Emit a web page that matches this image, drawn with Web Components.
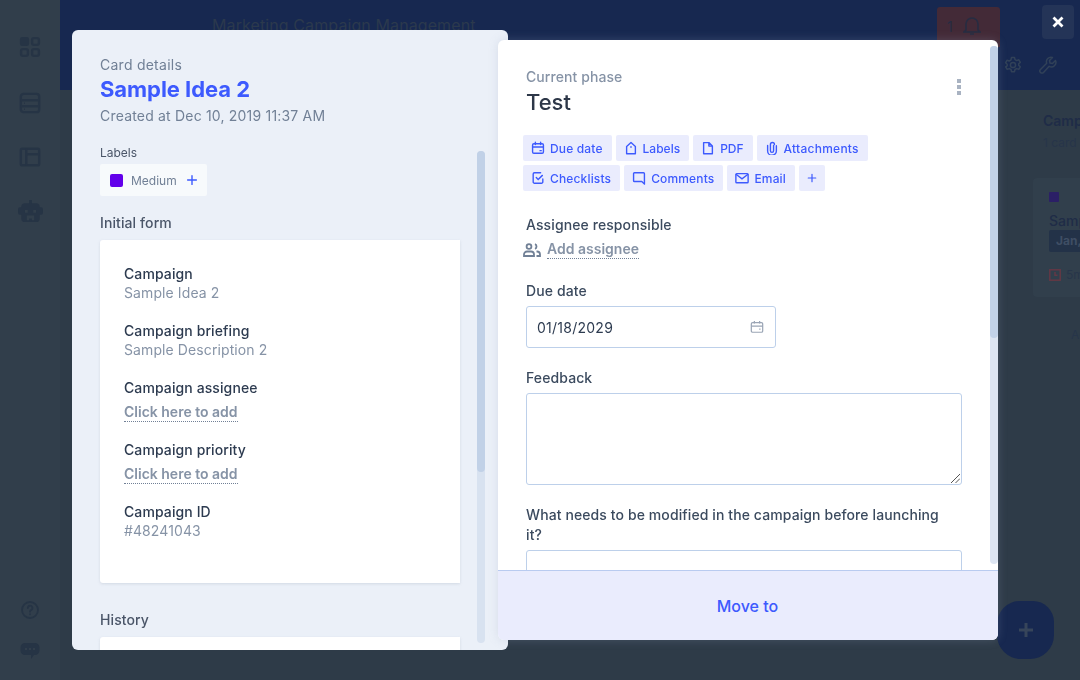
<!DOCTYPE html>
<html lang="en">
<head>
<meta charset="utf-8">
<title>Card details</title>
<style>
  html, body { margin: 0; height: 100%; overflow: hidden; background: #2e3b48; }
  body { font-family: Inter, "Liberation Sans", sans-serif; }
</style>
</head>
<body>
<app-backdrop></app-backdrop>
<modal-layer>
  <card-panel slot="left"></card-panel>
  <phase-panel slot="right"></phase-panel>
</modal-layer>

<script>
const ICONS = {
  calendar: '<rect x="1.800" y="3.200" width="12.400" height="10.800" rx="1.500"/><path d="M1.800 6.800h12.400M5 1.500v2.500M11 1.500v2.500M10.300 11h1.400"/>',
  label: '<path d="M3 14.500V6.200L8 1.800l5 4.400v8.300z" stroke-linejoin="round"/><path d="M7.700 6.800h.6"/>',
  file: '<path d="M3 1.800h6l4 4v8.700H3zM9 1.800v4h4" stroke-linejoin="round"/>',
  clip: '<path d="M9.800 5v6.200a1.800 1.800 0 0 1-3.600 0V4a2.300 2.300 0 0 1 4.600 0M13 5.500v5.800a5 5 0 0 1-10 0V5"/>',
  check: '<path d="M13.500 9v3.500a1.500 1.500 0 0 1-1.500 1.500H4a1.500 1.500 0 0 1-1.500-1.500V3.500A1.500 1.500 0 0 1 4 2h7M6 7.500l2.200 2.200 4.800-4.700"/>',
  comment: '<path d="M2.800 2h10.400a1 1 0 0 1 1 1v12l-3-3H2.800a1 1 0 0 1-1-1V3a1 1 0 0 1 1-1z" stroke-linejoin="round"/>',
  mail: '<rect x="1" y="3" width="14" height="10.500" rx="1"/><path d="M1.500 4l6.500 5 6.500-5"/>',
  plus: '<path d="M8 3v10M3 8h10"/>'
};

function icon(name, size) {
  return `<svg width="${size}" height="${size}" viewBox="0 0 16 16" fill="none" stroke="currentColor" stroke-width="1.600" stroke-linecap="round">${ICONS[name]}</svg>`;
}

class AppBackdrop extends HTMLElement {
  connectedCallback() {
    this.attachShadow({ mode: 'open' });
    this.shadowRoot.innerHTML = `
      <style>
        :host { display: grid; grid-template-columns: 60px 1fr; height: 680px; color: #27354a; font-size: 14px; }
        .side {
          background: #313e4b;
          display: flex; flex-direction: column; align-items: center;
          padding-top: 36px; box-sizing: border-box;
        }
        .side svg { display: block; flex: none; color: #263445; }
        .side .i1 { margin-bottom: 34px; }
        .side .i2 { margin-bottom: 32px; }
        .side .i3 { margin-bottom: 31px; }
        .side .spacer { flex: 1; }
        .side .i5 { margin-bottom: 23px; }
        .side .i6 { margin-bottom: 20px; }
        .content { display: flex; flex-direction: column; min-width: 0; }
        header { height: 90px; background: #172850; box-sizing: border-box; display: flex; flex-direction: column; }
        .top { display: flex; height: 40px; padding: 7px 80px 0 152px; box-sizing: border-box; }
        .title { font-size: 16px; line-height: 36px; letter-spacing: .1px; color: #2b394d; }
        .bell {
          margin-left: auto; width: 63px; height: 40px; background: #432a37;
          border-radius: 3px 3px 0 0; color: #262c42;
          display: flex; align-items: center; gap: 10px; padding: 0 0 2px 10px; box-sizing: border-box;
        }
        .tools { display: flex; justify-content: flex-end; gap: 17px; padding: 16px 23px 0 0; color: #314158; }
        main { flex: 1; background: #2e3b48; display: flex; justify-content: flex-end; overflow: hidden; }
        .lane { width: 47px; flex: none; overflow: hidden; white-space: nowrap; padding-top: 21px; box-sizing: border-box; }
        .lane-name { font-weight: 600; line-height: 20px; margin-left: 10px; color: #1f2c47; font-size: 14px; }
        .lane-count { font-size: 12px; line-height: 18px; margin: 3px 0 0 10px; color: #27354a; }
        .sample {
          margin-top: 26px; height: 119px; background: #313f4c; border-radius: 4px 0 0 4px;
          padding: 14px 0 0 16px; box-sizing: border-box;
        }
        .dot { width: 10px; height: 10px; background: #2b1f66; border-radius: 1px; }
        .name { font-weight: 500; line-height: 18px; margin-top: 10px; color: #1f2c47; }
        .date { background: #233248; color: #3f4e64; font-size: 12px; font-weight: 700; line-height: 22px; padding-left: 7px; border-radius: 2px 0 0 2px; }
        .time { display: flex; align-items: center; gap: 5px; margin-top: 15px; font-size: 12px; color: #28364a; }
        .time svg { color: #633845; flex: none; }
        .add { font-size: 12px; margin: 30px 0 0 38px; color: #27354a; }
        .fab-wrap { position: absolute; left: 997px; top: 601px; width: 57px; height: 58px; background: #172850; border-radius: 23px 21px 24px 24px; display: flex; align-items: center; justify-content: center; color: #37455a; }
      </style>
      <nav class="side">
        <svg class="i1" width="22" height="22" viewBox="0 0 24 24"><rect x="1" y="1" width="10" height="10" rx="2.500" fill="currentColor"/><g fill="none" stroke="currentColor" stroke-width="2.600"><rect x="14.300" y="2.300" width="7.400" height="7.400" rx="2"/><rect x="2.300" y="14.300" width="7.400" height="7.400" rx="2"/><rect x="14.300" y="14.300" width="7.400" height="7.400" rx="2"/></g></svg>
        <svg class="i2" width="22" height="22" viewBox="0 0 24 24" fill="none" stroke="currentColor" stroke-width="2.600"><rect x="2" y="2" width="20" height="20" rx="3"/><path d="M2 9h20M2 15.500h20"/><path d="M5.500 12.300h1M5.500 18.800h1" stroke-width="1.600"/></svg>
        <svg class="i3" width="22" height="22" viewBox="0 0 24 24" fill="none" stroke="currentColor" stroke-width="2.600"><rect x="2" y="3" width="20" height="18" rx="1.500"/><path d="M8 3v18M8 9h14"/></svg>
        <svg class="i4" width="27" height="24" viewBox="0 0 28 26"><path fill="currentColor" d="M12.500 1h3v3.500h4.500a4 4 0 0 1 4 4V9h1.500a2 2 0 0 1 2 2v4a2 2 0 0 1-2 2H24v4a4 4 0 0 1-4 4H8a4 4 0 0 1-4-4v-4H2.500a2 2 0 0 1-2-2v-4a2 2 0 0 1 2-2H4v-.500a4 4 0 0 1 4-4h4.500zM8 12v3h3v-3zM17 12v3h3v-3zM10 18v5h2.500v-2h3v2H18v-5z" fill-rule="evenodd"/></svg>
        <div class="spacer"></div>
        <svg class="i5" width="18" height="18" viewBox="0 0 18 18" fill="none" stroke="currentColor" stroke-width="1.800" stroke-linecap="round"><circle cx="9" cy="9" r="8"/><path d="M6.800 7a2.300 2.300 0 1 1 3.300 2.100c-.8.400-1.100.9-1.100 1.600M9 13.200v.1"/></svg>
        <svg class="i6" width="20" height="18" viewBox="0 0 20 18"><path fill="currentColor" fill-rule="evenodd" d="M5 1h10a4.500 4.500 0 0 1 4.500 4.500v3A4.500 4.500 0 0 1 15 13h-1l-3 4v-4H5A4.500 4.500 0 0 1 .5 8.500v-3A4.500 4.500 0 0 1 5 1zM5 6v2h2V6zM9 6v2h2V6zM13 6v2h2V6z"/></svg>
      </nav>
      <div class="content">
        <header>
          <div class="top">
            <span class="title">Marketing Campaign Management</span>
            <div class="bell"><span>1</span>
              <svg width="18" height="20" viewBox="0 0 18 20" fill="none" stroke="currentColor" stroke-width="1.600"><path d="M3 14V8a6 6 0 0 1 12 0v6l2 2H1zM7 18h4"/></svg>
            </div>
          </div>
          <div class="tools">
            <svg width="18" height="18" viewBox="0 0 18 18" fill="none" stroke="currentColor" stroke-width="1.500"><circle cx="9" cy="9" r="2.600"/><path d="M7.500 1.500h3l.5 2.200 1.700.9 2.100-.8 1.500 2.600-1.600 1.400v1.600l1.600 1.400-1.500 2.600-2.100-.8-1.700.9-.5 2.200h-3l-.5-2.200-1.700-.9-2.100.8-1.500-2.600L3.200 9.800V8.200L1.600 6.800l1.500-2.600 2.100.8 1.700-.9z" stroke-linejoin="round"/></svg>
            <svg width="18" height="18" viewBox="0 0 18 18" fill="none" stroke="currentColor" stroke-width="1.500" stroke-linejoin="round"><path d="M16.500 4.500l-3 3-2.500-.5-.5-2.500 3-3a4.500 4.500 0 0 0-5.800 5.800L1.500 13.500a2 2 0 0 0 3 3l5.700-6.200a4.500 4.500 0 0 0 6.300-5.800z"/></svg>
          </div>
        </header>
        <main>
          <div class="lane">
            <div class="lane-name">Campaign</div>
            <div class="lane-count">1 card</div>
            <div class="sample">
              <div class="dot"></div>
              <div class="name">Sample</div>
              <div class="date">Jan, 18</div>
              <div class="time">
                <svg width="12" height="12" viewBox="0 0 12 12" fill="none" stroke="currentColor" stroke-width="1.500"><rect x=".8" y=".8" width="10.400" height="10.400"/><path d="M6 3v3.300h2.500"/></svg>
                5m
              </div>
            </div>
            <div class="add">Add</div>
          </div>
        </main>
      </div>
      <div class="fab-wrap">
        <svg width="14" height="14" viewBox="0 0 14 14" fill="none" stroke="currentColor" stroke-width="3"><path d="M7 0v14M0 7h14"/></svg>
      </div>
    `;
  }
}
customElements.define('app-backdrop', AppBackdrop);

class ModalLayer extends HTMLElement {
  connectedCallback() {
    this.attachShadow({ mode: 'open' });
    this.shadowRoot.innerHTML = `
      <style>
        :host { display: block; position: fixed; inset: 0; }
        .left { position: absolute; left: 72px; top: 30px; }
        .right { position: absolute; left: 498px; top: 40px; }
        button {
          position: absolute; left: 1042px; top: 5px; width: 32px; height: 34px;
          background: #243457; border: 0; border-radius: 4px; padding: 0;
          display: flex; align-items: center; justify-content: center; color: #fff;
        }
      </style>
      <div class="left"><slot name="left"></slot></div>
      <div class="right"><slot name="right"></slot></div>
      <button aria-label="Close">
        <svg width="12" height="12" viewBox="0 0 12 12" fill="none" stroke="currentColor" stroke-width="2.800"><path d="M1.500 1.500l9 9M10.500 1.500l-9 9"/></svg>
      </button>
    `;
  }
}
customElements.define('modal-layer', ModalLayer);

class FieldValue extends HTMLElement {
  connectedCallback() {
    const link = this.hasAttribute('link');
    this.attachShadow({ mode: 'open' });
    this.shadowRoot.innerHTML = `
      <style>
        :host { display: block; margin-bottom: ${link ? 18 : 19}px; letter-spacing: .1px; }
        .label { font-size: 14px; font-weight: 500; line-height: 19px; color: #2d3b50; }
        .value { font-size: 14px; line-height: 19px; color: #8693a6; }
        .link {
          display: inline-block; font-size: 14px; font-weight: 600; line-height: 18px; margin-top: 6px; letter-spacing: 0;
          color: #8693a6; border-bottom: 1px dotted #718096;
        }
      </style>
      <div class="label">${this.getAttribute('label')}</div>
      ${link ? '<span class="link"><slot></slot></span>' : '<div class="value"><slot></slot></div>'}
    `;
  }
}
customElements.define('field-value', FieldValue);

class CardPanel extends HTMLElement {
  connectedCallback() {
    this.attachShadow({ mode: 'open' });
    this.shadowRoot.innerHTML = `
      <style>
        :host {
          display: block; position: relative; width: 436px; height: 620px; overflow: hidden;
          background: #ebf0f8; border-radius: 6px; box-sizing: border-box;
          padding: 25px 0 0 28px;
        }
        .eyebrow { font-size: 14px; line-height: 20px; letter-spacing: .25px; color: #718096; }
        h2 { margin: 0; font-size: 22px; font-weight: 700; line-height: 28px; letter-spacing: -.05px; color: #3d5afe; }
        .created { font-size: 14px; line-height: 20px; margin-top: 3px; letter-spacing: .19px; color: #718096; }
        .labels { font-size: 12px; line-height: 16px; margin-top: 19px; color: #4a5568; }
        .chip {
          display: inline-flex; align-items: center; height: 32px; width: 107px; margin-top: 3px; vertical-align: top;
          background: #f7fafc; border-radius: 2px; box-sizing: border-box; padding-left: 10px;
          font-size: 12px; color: #718096;
        }
        .swatch { width: 13px; height: 13px; border-radius: 2px; background: #6200ea; margin-right: 8px; }
        .chip svg { margin-left: 8px; color: #3d5afe; }
        h3 { margin: 0; font-size: 14px; font-weight: 500; line-height: 20px; letter-spacing: .1px; color: #4a5568; }
        .initial { margin-top: 17px; }
        .box {
          width: 360px; background: #fff; border-radius: 3px 0 0 3px; box-sizing: border-box;
          box-shadow: 0 1px 3px rgba(113, 128, 150, .2);
          margin-top: 7px;
        }
        .form { height: 343px; padding: 24px 0 0 24px; }
        .history { margin-top: 27px; }
        .bar-track { position: absolute; left: 405px; top: 121px; width: 8px; height: 492px; background: #d8e2f0; border-radius: 4px; }
        .bar-thumb { height: 321px; background: #c1d1e7; border-radius: 4px; }
      </style>
      <div class="eyebrow">Card details</div>
      <h2>Sample Idea 2</h2>
      <div class="created">Created at Dec 10, 2019 11:37 AM</div>
      <div class="labels">Labels</div>
      <div class="chip"><span class="swatch"></span>Medium${icon('plus', 14)}</div>
      <h3 class="initial">Initial form</h3>
      <div class="box form">
        <field-value label="Campaign">Sample Idea 2</field-value>
        <field-value label="Campaign briefing">Sample Description 2</field-value>
        <field-value label="Campaign assignee" link>Click here to add</field-value>
        <field-value label="Campaign priority" link>Click here to add</field-value>
        <field-value label="Campaign ID">#48241043</field-value>
      </div>
      <h3 class="history">History</h3>
      <div class="box" style="height:60px"></div>
      <div class="bar-track"><div class="bar-thumb"></div></div>
    `;
  }
}
customElements.define('card-panel', CardPanel);

class ActionChip extends HTMLElement {
  connectedCallback() {
    const name = this.getAttribute('icon');
    this.attachShadow({ mode: 'open' });
    this.shadowRoot.innerHTML = `
      <style>
        :host {
          display: inline-flex; align-items: center; gap: 5px; height: 26px; box-sizing: border-box;
          padding: 0 ${name === 'plus' ? 7 : 9}px 0 ${name === 'plus' ? 7 : 8}px; background: #eaecfd; border-radius: 2px;
          font-size: 12px; font-weight: 500; letter-spacing: .15px; color: #3d5afe; white-space: nowrap;
        }
        svg { flex: none; }
      </style>
      ${icon(name, name === 'plus' ? 12 : 14)}<slot></slot>
    `;
  }
}
customElements.define('action-chip', ActionChip);

class PhasePanel extends HTMLElement {
  connectedCallback() {
    this.attachShadow({ mode: 'open' });
    this.shadowRoot.innerHTML = `
      <style>
        :host {
          display: flex; flex-direction: column; position: relative; width: 500px; height: 600px;
          background: #fff; border-radius: 6px; overflow: hidden;
          box-shadow: 0 0 10px rgba(150, 165, 190, .25);
        }
        .body { flex: 1; min-height: 0; overflow: hidden; box-sizing: border-box; padding: 27px 36px 0 28px; color: #2d3b50; }
        .eyebrow { font-size: 14px; font-weight: 500; line-height: 20px; letter-spacing: .08px; color: #8693a6; }
        h2 { margin: 1px 0 0; font-size: 22px; font-weight: 500; line-height: 28px; color: #2d3748; }
        .menu { position: absolute; left: 459px; top: 39px; display: grid; gap: 2px; }
        .menu i { display: block; width: 4px; height: 4px; background: #a9b3c2; }
        .chips { display: flex; flex-wrap: wrap; gap: 4px; margin: 19px 0 0 -3px; width: 360px; }
        label { display: block; font-size: 14px; font-weight: 500; line-height: 20px; letter-spacing: .1px; color: #3b4a5e; }
        .assignee { margin-top: 24px; }
        .add { display: flex; align-items: center; gap: 6px; margin: 5px 0 0 -3px; color: #718096; }
        .add span { font-size: 14px; font-weight: 600; line-height: 18px; color: #8693a6; border-bottom: 1px dotted #718096; }
        .input {
          box-sizing: border-box; border: 1px solid #bdd0ea; border-radius: 3px; background: #fff;
        }
        .due-label { margin-top: 22px; }
        .date {
          display: flex; align-items: center; justify-content: space-between; width: 250px; height: 42px;
          margin-top: 5px; padding: 0 11px 0 10px; font-size: 14px; letter-spacing: .25px; color: #2d3b50;
        }
        .date svg { color: #9aa5b5; }
        .fb-label { margin-top: 20px; }
        .area { position: relative; width: 436px; height: 92px; margin-top: 5px; }
        .grip { position: absolute; right: 1px; bottom: 1px; }
        .q-label { margin-top: 20px; max-width: 420px; }
        .q-input { width: 436px; height: 42px; margin-top: 5px; }
        footer {
          flex: none; height: 70px; box-sizing: border-box; border-top: 1px solid #b9cbf0; background: #eaecfd;
          display: flex; align-items: center; justify-content: center; padding-right: 1px;
          font-size: 16px; font-weight: 500; color: #3d5afe;
        }
        .bar-track { position: absolute; left: 492px; top: 6px; width: 8px; height: 518px; background: #dde5f2; border-radius: 4px; }
        .bar-thumb { height: 292px; background: #c2d2e8; border-radius: 4px; }
      </style>
      <div class="body">
        <div class="eyebrow">Current phase</div>
        <h2>Test</h2>
        <div class="menu"><i></i><i></i><i></i></div>
        <div class="chips">
          <action-chip icon="calendar">Due date</action-chip>
          <action-chip icon="label" style="letter-spacing:0">Labels</action-chip>
          <action-chip icon="file" style="letter-spacing:0">PDF</action-chip>
          <action-chip icon="clip" style="letter-spacing:.25px">Attachments</action-chip>
          <action-chip icon="check">Checklists</action-chip>
          <action-chip icon="comment">Comments</action-chip>
          <action-chip icon="mail">Email</action-chip>
          <action-chip icon="plus"></action-chip>
        </div>
        <label class="assignee">Assignee responsible</label>
        <div class="add">
          <svg width="18" height="14" viewBox="0 0 18 14" fill="none" stroke="currentColor" stroke-width="1.800"><circle cx="6" cy="3.500" r="2.400"/><path d="M1 13v-1.500A3 3 0 0 1 4 8.500h4a3 3 0 0 1 3 3V13zM12 1.200a2.500 2.500 0 0 1 0 4.600M13.500 8.500h.5a3 3 0 0 1 3 3V13h-3.500"/></svg>
          <span>Add assignee</span>
        </div>
        <label class="due-label">Due date</label>
        <div class="input date">01/18/2029
          <svg width="14" height="14" viewBox="0 0 16 16" fill="none" stroke="currentColor" stroke-width="1.400"><rect x="1.500" y="3" width="13" height="11" rx="1.500"/><path d="M1.500 7h13M5 1v3M11 1v3M10.500 10.500h1.500"/></svg>
        </div>
        <label class="fb-label">Feedback</label>
        <div class="input area">
          <svg class="grip" width="9" height="9" viewBox="0 0 9 9" fill="none" stroke="#555" stroke-width="1"><path d="M9 0L0 9M9 4.500L4.500 9"/></svg>
        </div>
        <label class="q-label">What needs to be modified in the campaign before launching it?</label>
        <div class="input q-input"></div>
      </div>
      <footer>Move to</footer>
      <div class="bar-track"><div class="bar-thumb"></div></div>
    `;
  }
}
customElements.define('phase-panel', PhasePanel);
</script>
</body>
</html>
